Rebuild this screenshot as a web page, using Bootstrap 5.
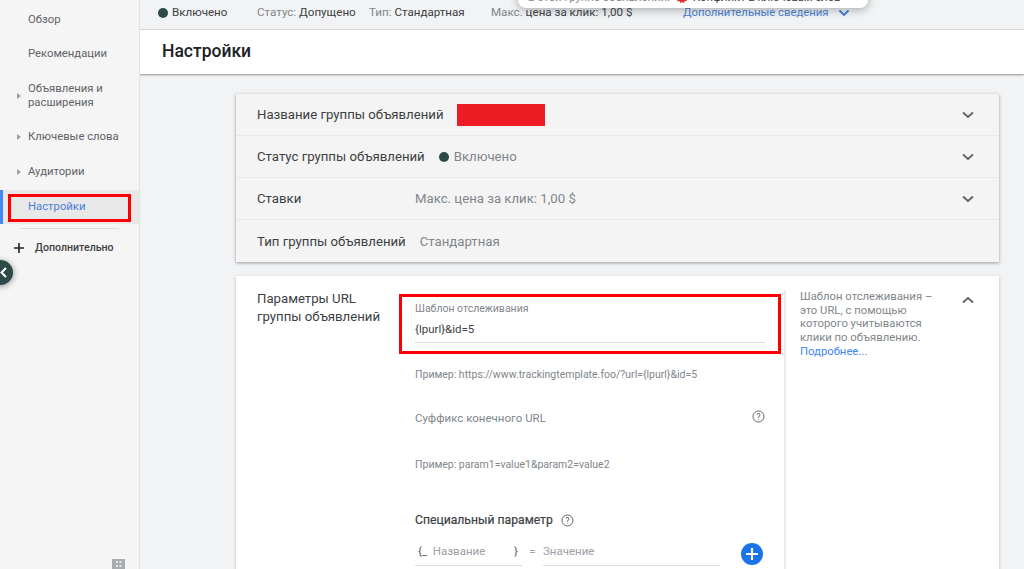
<!DOCTYPE html>
<html lang="ru">
  <head>
    <meta charset="UTF-8" />
    <meta name="viewport" content="width=device-width, initial-scale=1.0" />
    <title>Настройки</title>
    <link
      href="https://cdn.jsdelivr.net/npm/bootstrap@5.3.3/dist/css/bootstrap.min.css"
      rel="stylesheet"
    />
    <style>
      html, body { height: 569px; overflow: hidden; }
      body {
        font-family: Roboto, "Liberation Sans", sans-serif;
        background: #f1f3f4;
        color: #3c4043;
        position: relative;
      }
      .side-panel {
        width: 140px;
        height: 569px;
        flex: none;
        background: #f5f5f5;
        border-right: 1px solid #e2e3e4;
        font-size: 11.3px;
        color: #5f6368;
        position: relative;
        padding-top: 13px;
      }
      .side-item { padding-left: 28px; position: relative; line-height: 14px; margin-top: 20px; }
      .side-item.first { margin-top: 0; }
      .side-item.gap21 { margin-top: 21px; }
      .side-item.has-sub::before {
        content: "";
        position: absolute;
        left: 17px;
        top: 50%;
        margin-top: -3px;
        border-left: 4px solid #9aa0a6;
        border-top: 3px solid transparent;
        border-bottom: 3px solid transparent;
      }
      .side-active {
        height: 34px;
        margin-top: 11px;
        background: #e8e8e8;
        border-left: 3px solid #4285f4;
        padding: 4px 8px 0 5px;
      }
      .side-active div {
        height: 28px;
        border: 3px solid #f00;
        padding-left: 17px;
        line-height: 20px;
        color: #4a7fd6;
      }
      .side-rule { height: 1px; background: #dcdcdc; margin: 4px 20px 0 21px; }
      .side-more { font-size: 10.6px; font-weight: 500; color: #3c4043; padding-left: 13px; margin-top: 11px; }
      .side-more svg { margin-right: 10px; }
      .collapse-dot {
        position: absolute;
        left: -12px;
        top: 260px;
        width: 25px;
        height: 25px;
        border-radius: 50%;
        background: #2b4a48;
        box-shadow: 0 1px 6px rgba(0, 0, 0, 0.45);
      }
      .collapse-dot svg { position: absolute; left: 12px; top: 7px; }
      .side-foot { position: absolute; left: 112px; top: 559px; }
      .status-strip {
        height: 30px;
        font-size: 11.6px;
        color: #80868b;
        border-bottom: 1px solid #dadce0;
        padding: 5px 0 0 18px;
        line-height: 15px;
      }
      .status-strip b { font-weight: 400; color: #3c4043; }
      .strip-on { width: 99px; height: 15px; }
      .strip-status { width: 112px; }
      .strip-type { width: 122px; }
      .strip-bid { width: 192px; }
      .strip-more { color: #4a7fd6; height: 15px; font-size: 11.3px; }
      .strip-more svg { margin-left: 9px; }
      .dot { display: inline-block; width: 10px; height: 10px; border-radius: 50%; background: #2b4a48; }
      .dot-on { margin: 0 5px 0 14px; }
      .page-head {
        height: 44px;
        background: #fff;
        padding-left: 22px;
        font-size: 17.5px;
        font-weight: 500;
        line-height: 43px;
        color: #202124;
        box-shadow: 0 1px 2px rgba(60, 64, 67, 0.55);
      }
      .content-wrap { padding: 20px 25px 0 96px; }
      .set-panel { background: #f4f4f4; box-shadow: 0 1px 3px rgba(60, 64, 67, 0.5); }
      .set-row {
        height: 42px;
        padding: 1px 25px 0 21px;
        font-size: 13.2px;
        border-bottom: 1px solid #e8e8e8;
      }
      .set-row:last-child { border-bottom: 0; }
      .set-value { color: #80868b; }
      .bid-label { width: 158px; }
      .type-value { margin-left: 14px; }
      .mask { width: 88px; height: 22px; background: #ee1c25; margin-left: 13px; }
      .url-panel { background: #fff; margin-top: 14px; height: 320px; box-shadow: 0 1px 3px rgba(60, 64, 67, 0.3); }
      .url-title { width: 142px; flex: none; padding: 14px 0 0 21px; box-sizing: content-box; font-size: 13.2px; line-height: 18px; }
      .url-form { width: 387px; flex: none; border-right: 2px solid #e8eaed; margin-top: 14px; padding: 4px 3px 0 0; }
      .red-frame { height: 60px; width: 382px; border: 3px solid #f00; padding: 5px 13px 0 13px; }
      .field-label { font-size: 10.5px; color: #80868b; line-height: 13px; }
      .field-value { font-size: 11.5px; line-height: 14px; margin-top: 7px; padding-bottom: 6px; border-bottom: 1px solid #dadce0; color: #3c4043; }
      .form-body { padding: 14px 16px 0 16px; }
      .hint-text { font-size: 10.5px; color: #80868b; line-height: 14px; }
      .hint-second { margin-top: 33px; }
      .suffix-row { font-size: 11.5px; color: #80868b; line-height: 14px; margin-top: 29px; }
      .suffix-row svg { margin-top: -1px; }
      .param-title { font-size: 12.2px; color: #3c4043; line-height: 14px; margin-top: 41px; -webkit-text-stroke: 0.2px #3c4043; }
      .param-row { font-size: 11.5px; color: #9aa0a6; margin-top: 17px; line-height: 14px; }
      .param-name { width: 107px; padding: 0 0 7px 3px; border-bottom: 1px solid #dadce0; }
      .param-brace { color: #5f6368; }
      .param-eq { width: 21px; text-align: center; }
      .param-value { width: 177px; padding: 0 0 7px 0; border-bottom: 1px solid #dadce0; }
      .plus-btn { width: 22px; height: 22px; border-radius: 50%; background: #1a73e8; margin: -1px 0 0 21px; border: 0; padding: 0; }
      .help-text { width: 146px; flex: none; font-size: 11.3px; line-height: 13.7px; color: #80868b; padding: 14px 0 0 14px; box-sizing: content-box; }
      .help-text a { color: #4285f4; text-decoration: none; }
      .chev-up { margin: 20px 0 0 16px; }
      .pop-note {
        position: absolute;
        left: 518px;
        top: -12px;
        width: 350px;
        height: 20px;
        background: #fff;
        border-radius: 8px;
        box-shadow: 0 2px 8px rgba(60, 64, 67, 0.4);
        font-size: 11.3px;
        line-height: 14px;
        padding: 3px 0 0 10px;
        color: #80868b;
        white-space: nowrap;
      }
      .pop-note b { font-weight: 400; color: #3c4043; }
      .pop-note svg { margin: 0 5px 0 6px; vertical-align: -2px; }
    </style>
  </head>
  <body>
    <div class="d-flex">
      <nav class="side-panel">
        <div class="side-item first">Обзор</div>
        <div class="side-item">Рекомендации</div>
        <div class="side-item gap21 has-sub">Объявления и<br />расширения</div>
        <div class="side-item has-sub">Ключевые слова</div>
        <div class="side-item gap21 has-sub">Аудитории</div>
        <div class="side-active"><div>Настройки</div></div>
        <div class="side-rule"></div>
        <div class="side-more d-flex align-items-center">
          <svg width="12" height="12" viewBox="0 0 12 12"><path d="M6 1v10M1 6h10" stroke="#202124" stroke-width="1.6" /></svg>
          Дополнительно
        </div>
        <div class="collapse-dot">
          <svg width="7" height="11" viewBox="0 0 7 11"><path d="M6 1 1.5 5.5 6 10" fill="none" stroke="#fff" stroke-width="2" /></svg>
        </div>
        <svg class="side-foot" width="13" height="12" viewBox="0 0 13 12"><rect width="13" height="12" fill="#a8acae" /><path d="M4 2h2v2H4zM7.500 2h2v2h-2zM4 6h2v2H4zM7.500 6h2v2h-2z" fill="#e4e5e6" /></svg>
      </nav>

      <div class="flex-grow-1">
        <div class="status-strip d-flex">
          <span class="strip-on d-flex align-items-center"><i class="dot me-1"></i><b>Включено</b></span>
          <span class="strip-status">Статус: <b>Допущено</b></span>
          <span class="strip-type">Тип: <b>Стандартная</b></span>
          <span class="strip-bid">Макс. <b>цена за клик: 1,00 $</b></span>
          <span class="strip-more d-flex align-items-center">Дополнительные сведения
            <svg width="12" height="8" viewBox="0 0 12 8"><path d="M1.500 1.500 6 6l4.500-4.500" fill="none" stroke="#3b78d8" stroke-width="1.800" /></svg>
          </span>
        </div>
        <div class="page-head">Настройки</div>

        <div class="content-wrap">
          <div class="set-panel">
            <div class="set-row d-flex align-items-center">
              <span>Название группы объявлений</span>
              <span class="mask"></span>
              <svg class="ms-auto" width="12" height="8" viewBox="0 0 12 8"><path d="M1 1.500 6 6l5-4.500" fill="none" stroke="#5f6368" stroke-width="1.800" /></svg>
            </div>
            <div class="set-row d-flex align-items-center">
              <span>Статус группы объявлений</span>
              <i class="dot dot-on"></i>
              <span class="set-value">Включено</span>
              <svg class="ms-auto" width="12" height="8" viewBox="0 0 12 8"><path d="M1 1.500 6 6l5-4.500" fill="none" stroke="#5f6368" stroke-width="1.800" /></svg>
            </div>
            <div class="set-row d-flex align-items-center">
              <span class="bid-label">Ставки</span>
              <span class="set-value">Макс. цена за клик: 1,00 $</span>
              <svg class="ms-auto" width="12" height="8" viewBox="0 0 12 8"><path d="M1 1.500 6 6l5-4.500" fill="none" stroke="#5f6368" stroke-width="1.800" /></svg>
            </div>
            <div class="set-row d-flex align-items-center">
              <span>Тип группы объявлений</span>
              <span class="set-value type-value">Стандартная</span>
            </div>
          </div>

          <div class="url-panel d-flex">
            <div class="url-title">Параметры URL<br />группы объявлений</div>
            <div class="url-form">
              <div class="red-frame">
                <div class="field-label">Шаблон отслеживания</div>
                <div class="field-value">{lpurl}&amp;id=5</div>
              </div>
              <div class="form-body">
                <div class="hint-text">Пример: https://www.trackingtemplate.foo/?url={lpurl}&amp;id=5</div>
                <div class="suffix-row d-flex justify-content-between">
                  <span>Суффикс конечного URL</span>
                  <svg width="13" height="13" viewBox="0 0 13 13"><circle cx="6.500" cy="6.500" r="5.500" fill="none" stroke="#5f6368" /><text x="6.500" y="9.700" text-anchor="middle" font-size="9" fill="#5f6368">?</text></svg>
                </div>
                <div class="hint-text hint-second">Пример: param1=value1&amp;param2=value2</div>
                <div class="param-title d-flex align-items-center">
                  Специальный параметр
                  <svg class="ms-2" width="13" height="13" viewBox="0 0 13 13"><circle cx="6.500" cy="6.500" r="5.500" fill="none" stroke="#5f6368" /><text x="6.500" y="9.700" text-anchor="middle" font-size="9" fill="#5f6368">?</text></svg>
                </div>
                <div class="param-row d-flex">
                  <div class="param-name d-flex justify-content-between">
                    <span><span class="param-brace">{_</span>&nbsp;&nbsp;Название</span><span class="param-brace me-1">}</span>
                  </div>
                  <span class="param-eq">=</span>
                  <div class="param-value">Значение</div>
                  <button class="plus-btn d-flex align-items-center justify-content-center" type="button" aria-label="Добавить">
                    <svg width="14" height="14" viewBox="0 0 14 14"><path d="M7 1v12M1 7h12" stroke="#fff" stroke-width="2.200" /></svg>
                  </button>
                </div>
              </div>
            </div>
            <div class="help-text">
              Шаблон отслеживания –<br />это URL, с помощью<br />которого учитываются<br />клики по объявлению.<br /><a href="#">Подробнее...</a>
            </div>
            <svg class="chev-up flex-shrink-0" width="12" height="8" viewBox="0 0 12 8"><path d="M1 6.500 6 2l5 4.500" fill="none" stroke="#5f6368" stroke-width="1.800" /></svg>
          </div>
        </div>
      </div>
    </div>

    <div class="pop-note">В этой группе объявлений:<svg width="12" height="12" viewBox="0 0 12 12"><circle cx="6" cy="6" r="5" fill="#d93025" stroke="#d93025" stroke-width="2" stroke-dasharray="1.500 1.200" /><path d="M6 3v3.500M6 8v1" stroke="#fff" stroke-width="1.200" /></svg><b>Конфликт 2 ключевых слов</b></div>
  </body>
</html>
